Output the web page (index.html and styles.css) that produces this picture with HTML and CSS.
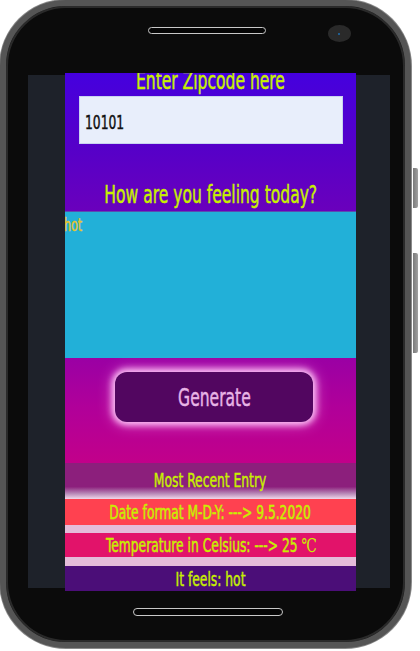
FILE: index.html
```html
<!DOCTYPE html>
<html>
<head>
<meta charset="utf-8">
<link rel="stylesheet" href="styles.css">
</head>
<body>
<div class="device">
  <div class="phone">
    <div class="top-bar">
      <div class="speaker"></div>
      <div class="camera"><div class="lens"></div></div>
    </div>
    <div class="screen">
      <div class="app">
        <div class="intro">
          <h2 class="title"><span class="nar">Enter Zipcode here</span></h2>
          <div class="zip"><span class="nar left">10101</span></div>
          <h2 class="question"><span class="nar">How are you feeling today?</span></h2>
        </div>
        <div class="feel"><span class="nar left">hot</span></div>
        <div class="action">
          <button class="generate"><span class="nar">Generate</span></button>
        </div>
        <div class="entries">
          <div class="entry recent"><span class="nar">Most Recent Entry</span></div>
          <div class="entry date"><span class="nar">Date format M-D-Y: ---&gt; 9.5.2020</span></div>
          <div class="entry temp"><span class="nar">Temperature in Celsius: ---&gt; 25 <span class="deg">℃</span></span></div>
          <div class="entry content"><span class="nar">It feels: hot</span></div>
        </div>
      </div>
    </div>
    <div class="bottom-bar">
      <div class="home"></div>
    </div>
  </div>
  <div class="side-buttons">
    <div class="btn vol"></div>
    <div class="btn power"></div>
  </div>
</div>
</body>
</html>
```

FILE: styles.css
```css
html, body {
  margin: 0;
  padding: 0;
  background: #ffffff;
}

.device {
  display: flex;
  align-items: flex-start;
  width: 420px;
  height: 651px;
}

.phone {
  width: 411px;
  height: 648px;
  box-sizing: border-box;
  border-radius: 66px;
  background: #0b0b0b;
  border: 6px solid #555555;
  box-shadow: inset 0 0 0 2px #2a2a2a, 0 0 0 1px #8a8a8a;
  display: flex;
  flex-direction: column;
  overflow: hidden;
}

.top-bar {
  height: 69px;
  flex: none;
  display: grid;
  grid-template-columns: 1fr 120px 1fr;
  align-items: start;
}

.speaker {
  grid-column: 2;
  margin-top: 21px;
  margin-left: 2px;
  height: 5px;
  border: 1px solid #c8c8c8;
  border-radius: 4px;
  background: #050505;
}

.camera {
  grid-column: 3;
  margin-top: 19px;
  margin-left: 62px;
  width: 23px;
  height: 17px;
  border-radius: 50%;
  background: #2a2a2a;
  display: flex;
  align-items: center;
  justify-content: center;
}

.lens {
  width: 2px;
  height: 2px;
  border-radius: 50%;
  background: #1f6fb0;
}

.screen {
  flex: none;
  margin-left: 22px;
  width: 362px;
  height: 513px;
  background: #1e222a;
}

.app {
  margin-left: 37px;
  margin-top: -2px;
  width: 291px;
  height: 518px;
  overflow: hidden;
  display: flex;
  flex-direction: column;
  font-family: "DejaVu Sans Condensed", "Liberation Sans", sans-serif;
}

.nar {
  display: inline-block;
  transform: scaleX(0.72);
  transform-origin: center;
  white-space: nowrap;
  -webkit-text-stroke: 0.45px currentColor;
}

.nar.left {
  transform-origin: left;
}

.intro {
  height: 138px;
  flex: none;
  background: linear-gradient(180deg, #4500de 0%, #5600c8 55%, #6a00bc 100%);
  display: flex;
  flex-direction: column;
  align-items: center;
}

.title {
  margin: -7px 0 0 0;
  height: 30px;
  font-size: 24px;
  line-height: 30px;
  font-weight: normal;
  color: #c8f000;
  text-align: center;
  white-space: nowrap;
}

.zip {
  width: 264px;
  height: 48px;
  box-sizing: border-box;
  background: #e8eefb;
  border: 1px solid #c9d3f0;
  padding: 13px 0 0 5px;
  font-size: 19px;
  line-height: 24px;
  color: #111111;
}

.question {
  margin: 37px 0 0 0;
  font-size: 24px;
  line-height: 28px;
  font-weight: normal;
  color: #c8f000;
  text-align: center;
  white-space: nowrap;
}

.feel {
  height: 147px;
  flex: none;
  box-sizing: border-box;
  background: #22b0d8;
  border-top: 1px solid #5b4db0;
  padding: 2px 0 0 0;
  margin-left: -1px;
  font-size: 17px;
  line-height: 22px;
  color: #e8c42a;
}

.action {
  height: 105px;
  flex: none;
  background: linear-gradient(180deg, #9a00a4 0%, #b0009a 45%, #c2008a 100%);
  display: flex;
  justify-content: center;
  align-items: flex-start;
}

.generate {
  margin-top: 14px;
  margin-left: 7px;
  width: 198px;
  height: 50px;
  border: none;
  border-radius: 12px;
  background: #520660;
  box-shadow: 0 0 6px 3px rgba(255, 200, 250, 0.95), 0 0 14px 4px rgba(255, 170, 240, 0.45);
  color: #e8b4e6;
  font-family: "DejaVu Sans Condensed", "Liberation Sans", sans-serif;
  font-size: 24px;
  line-height: 30px;
  padding: 2px 0 0 0;
}

.entries {
  flex: 1;
  background: #e4bcd9;
  display: flex;
  flex-direction: column;
}

.entry {
  color: #c8f000;
  text-align: center;
  font-size: 19px;
  white-space: nowrap;
}

.recent {
  height: 36px;
  line-height: 35px;
  background: linear-gradient(180deg, #8c1f7c 0%, #8c1f7c 66%, #b98ab8 85%, #f0d8ea 100%);
}

.date {
  height: 26px;
  line-height: 27px;
  background: #ff4150;
}

.temp {
  margin-top: 8px;
  height: 24px;
  line-height: 25px;
  background: #e2136a;
}

.deg {
  font-family: "DejaVu Serif", "Liberation Serif", serif;
  font-size: 19px;
  -webkit-text-stroke: 0;
}

.content {
  margin-top: 9px;
  height: 25px;
  line-height: 26px;
  background: #4b0e78;
}

.bottom-bar {
  flex: 1;
  display: flex;
  justify-content: center;
  align-items: flex-start;
}

.home {
  margin-top: 20px;
  margin-left: 4px;
  width: 148px;
  height: 6px;
  border: 1px solid #c8c8c8;
  border-radius: 5px;
  background: #050505;
}

.side-buttons {
  display: flex;
  flex-direction: column;
  margin-left: 2px;
  margin-top: 168px;
}

.btn {
  width: 5px;
  background: linear-gradient(90deg, #7a7a7a, #a0a0a0);
  border-radius: 0 2px 2px 0;
}

.vol {
  height: 40px;
}

.power {
  margin-top: 45px;
  height: 100px;
}
```
